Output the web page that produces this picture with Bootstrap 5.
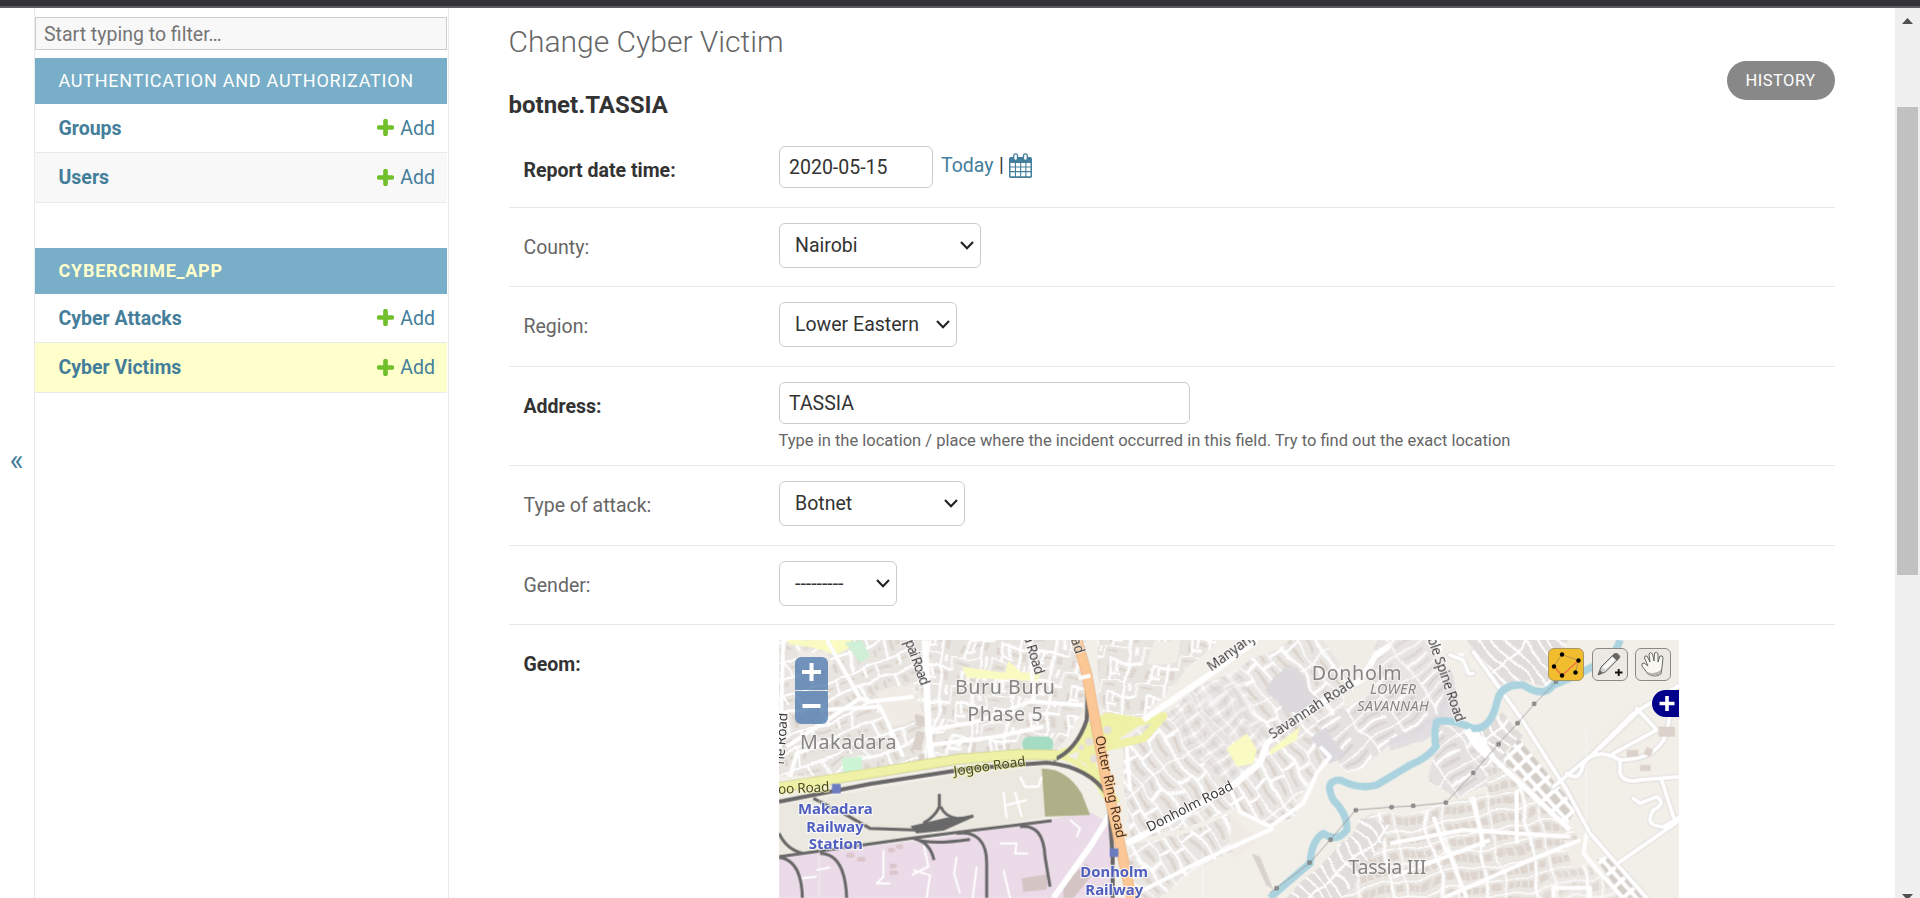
<!DOCTYPE html>
<html lang="en">
<head>
<meta charset="utf-8">
<meta name="viewport" content="width=device-width, initial-scale=1">
<title>Change Cyber Victim</title>
<link href="https://cdn.jsdelivr.net/npm/bootstrap@5.3.0/dist/css/bootstrap.min.css" rel="stylesheet">
<script src="https://cdn.jsdelivr.net/npm/bootstrap@5.3.0/dist/js/bootstrap.bundle.min.js" defer></script>
<style>
  html, body { height: 100%; }
  body { font-family: Roboto, "Liberation Sans", sans-serif; font-size: 19.5px; line-height: 24px; color: #333; background: #fff; overflow: hidden; }
  a { color: #447e9b; text-decoration: none; }
  .top-strip { height: 8px; background: #333438; border-bottom: 2px solid #5f5d63; }
  .rail { width: 34px; padding: 440px 1px 0 0; font-size: 30px; line-height: 24px; color: #447e9b; }
  .side { width: 415px; border: solid #eaeaea; border-width: 0 1px; padding: 9px 1px 0 0; }
  .side .form-control { height: 33px; border: 1px solid #ccc; border-radius: 0; background: #f8f8f8; padding: 1px 8px 0; font-size: 19.5px; line-height: 30px; margin-bottom: 8px; }
  .side .form-control::placeholder { color: #757575; }
  .app-head { height: 46px; padding: 0 23.5px; line-height: 45px; font-size: 18px; letter-spacing: .75px; background: #79aec8; color: #fff; text-transform: uppercase; }
  .app-head.current { color: #ffffcc; font-weight: 700; letter-spacing: .75px; }
  .app-list { margin-bottom: 45px; border-bottom: 1px solid #eaeaea; }
  .app-list .list-group-item { height: 49px; padding: 1px 12px 0 23.5px; border: 0; border-bottom: 1px solid #e8e8e8; background: #fff; }
  .app-list .list-group-item.alt { background: #f8f8f8; }
  .app-list .list-group-item.current { background: #ffffcc; }
  .app-list svg { margin: -2px 6px 0 0; }
  main { padding: 16px 60px 0 59.5px; }
  h1 { font-size: 30px; font-weight: 300; line-height: 36px; color: #666; margin: 0 0 30px; }
  h2 { font-size: 24px; font-weight: 700; line-height: 30px; margin: 0 0 11px; }
  .history { margin-top: 37px; width: 108px; height: 39px; padding: 0 1px 0 0; line-height: 39px; background: #888; color: #fff; font-size: 16.5px; letter-spacing: .5px; border: 0; }
  .field { border-bottom: 1px solid #e8e8e8; padding-top: 15px; }
  .field.h77 { height: 77px; } .field.h79 { height: 79px; } .field.h80 { height: 80px; } .field.h99 { height: 99px; }
  .field > label { width: 270.5px; padding: 13px 0 0 15px; flex: none; color: #666; }
  .field > label.fw-bold { color: #333; }
  .field .form-control, .field .form-select { font-size: 19.5px; color: #333; border: 1px solid #ccc; border-radius: 6px; background-color: #fff; }
  .field .form-control { height: 42px; padding: 0 9px; line-height: 40px; }
  .field .form-select { height: 45px; padding: 0 30px 0 15px; line-height: 42px; background-image: url("data:image/svg+xml,%3Csvg xmlns='http://www.w3.org/2000/svg' viewBox='0 0 14 9'%3E%3Cpath d='M1 1l6 6.3L13 1' fill='none' stroke='%23222' stroke-width='2.1'/%3E%3C/svg%3E"); background-size: 14px 9px; background-position: right 6px center; }
  .w-date { width: 154px; } .w-county { width: 202px; } .w-region { width: 178px; } .w-address { width: 411px; } .w-attack { width: 186px; } .w-gender { width: 118px; }
  .date-links { gap: 5.5px; margin: 7px 0 0 8px; }
  .help-line { font-size: 16.5px; line-height: 20px; color: #666; margin: 7px 0 0 -.5px; }
  .map { width: 900px; height: 258px; position: relative; overflow: hidden; background: #f2efe9; }
  .map > svg { display: block; }
  .zoomer { position: absolute; left: 16px; top: 17px; width: 33px; }
  .zoomer div { height: 33px; background: rgba(84,126,176,.82); border-radius: 6px 6px 0 0; }
  .zoomer div + div { margin-top: 1px; border-radius: 0 0 6px 6px; }
  .tools { position: absolute; right: 8px; top: 8px; gap: 7px; }
  .tools div { width: 36px; height: 33px; border: 1px solid #8a8984; border-radius: 6px; background: #ebe9e3; }
  .tools div.on { background: #f1bd2e; border-color: #a99763; margin-right: 1px; }
  .tools svg, .zoomer svg, .layers svg { display: block; }
  .layers { position: absolute; right: 0; top: 50px; width: 27px; height: 27px; border-radius: 14px 0 0 14px; background: #00008b; }
  .scroller { width: 25px; background: #f0f0f0; padding-top: 10px; }
  .scroller .thumb { width: 21px; height: 468px; background: #c1c1c1; margin: 83px 0 319px 2px; }
  .scroller svg { display: block; margin-left: 7px; }
  .pl { font-family: "Noto Sans", sans-serif; }
</style>
</head>
<body class="d-flex flex-column vh-100">
<div class="top-strip flex-shrink-0"></div>
<div class="d-flex flex-grow-1 overflow-hidden">
  <div class="rail flex-shrink-0 text-center">«</div>
  <nav class="side flex-shrink-0">
    <input class="form-control" type="text" placeholder="Start typing to filter…">
    <div class="app-head">Authentication and Authorization</div>
    <ul class="list-group list-group-flush app-list">
      <li class="list-group-item d-flex align-items-center justify-content-between"><a class="fw-bold" href="#">Groups</a><a href="#" class="d-flex align-items-center"><svg width="17" height="17" viewBox="0 0 16 16"><path d="M8 2v12M2 8h12" stroke="#70bf2b" stroke-width="4.400" stroke-linecap="round"/></svg>Add</a></li>
      <li class="list-group-item alt d-flex align-items-center justify-content-between"><a class="fw-bold" href="#">Users</a><a href="#" class="d-flex align-items-center"><svg width="17" height="17" viewBox="0 0 16 16"><path d="M8 2v12M2 8h12" stroke="#70bf2b" stroke-width="4.400" stroke-linecap="round"/></svg>Add</a></li>
    </ul>
    <div class="app-head current">Cybercrime_App</div>
    <ul class="list-group list-group-flush app-list">
      <li class="list-group-item d-flex align-items-center justify-content-between"><a class="fw-bold" href="#">Cyber Attacks</a><a href="#" class="d-flex align-items-center"><svg width="17" height="17" viewBox="0 0 16 16"><path d="M8 2v12M2 8h12" stroke="#70bf2b" stroke-width="4.400" stroke-linecap="round"/></svg>Add</a></li>
      <li class="list-group-item current d-flex align-items-center justify-content-between"><a class="fw-bold" href="#">Cyber Victims</a><a href="#" class="d-flex align-items-center"><svg width="17" height="17" viewBox="0 0 16 16"><path d="M8 2v12M2 8h12" stroke="#70bf2b" stroke-width="4.400" stroke-linecap="round"/></svg>Add</a></li>
    </ul>
  </nav>
  <main class="flex-grow-1">
    <div class="d-flex justify-content-between align-items-start">
      <div><h1>Change Cyber Victim</h1><h2>botnet.TASSIA</h2></div>
      <a class="btn rounded-pill history" href="#">HISTORY</a>
    </div>
    <div class="field h77 d-flex align-items-start">
      <label class="fw-bold">Report date time:</label>
      <input class="form-control w-date" type="text" value="2020-05-15">
      <div class="d-flex align-items-center date-links"><a href="#">Today</a><span>|</span>
        <svg width="23" height="25" viewBox="0 0 23 25"><rect x="0" y="4" width="23" height="21" rx="1.800" fill="#447e9b"/><path d="M1.500 10h4.400v3.400H1.500zM7 10h4.100v3.400H7zM12.200 10h4.100v3.400h-4.100zM17.400 10h4.100v3.400h-4.100zM1.500 14.500h4.400V18H1.500zM7 14.500h4.100V18H7zM12.200 14.500h4.100V18h-4.100zM17.400 14.500h4.100V18h-4.100zM1.500 19.200h4.400v4.100H1.500zM7 19.200h4.100v4.100H7zM12.200 19.200h4.100v4.100h-4.100zM17.400 19.200h4.100v4.100h-4.100z" fill="#fff"/><rect x="4.700" y=".8" width="3.800" height="6.500" rx="1.900" fill="#fff" stroke="#447e9b" stroke-width="1.300"/><rect x="14.500" y=".8" width="3.800" height="6.500" rx="1.900" fill="#fff" stroke="#447e9b" stroke-width="1.300"/></svg>
      </div>
    </div>
    <div class="field h79 d-flex align-items-start"><label>County:</label><select class="form-select w-county"><option>Nairobi</option></select></div>
    <div class="field h80 d-flex align-items-start"><label>Region:</label><select class="form-select w-region"><option>Lower Eastern</option></select></div>
    <div class="field h99 d-flex align-items-start"><label class="fw-bold">Address:</label><div><input class="form-control w-address" type="text" value="TASSIA"><div class="help-line">Type in the location / place where the incident occurred in this field. Try to find out the exact location</div></div></div>
    <div class="field h80 d-flex align-items-start"><label>Type of attack:</label><select class="form-select w-attack"><option>Botnet</option></select></div>
    <div class="field h79 d-flex align-items-start"><label>Gender:</label><select class="form-select w-gender"><option>---------</option></select></div>
    <div class="field border-0 d-flex align-items-start"><label class="fw-bold">Geom:</label>
      <div class="map">
        <svg width="900" height="258" viewBox="27 30 2700 774">
          <defs>
            <filter id="soft" x="0" y="0" width="100%" height="100%"><feGaussianBlur stdDeviation="1.600"/></filter>
            <!-- bends the regular street grids a little -->
            <filter id="bend" x="0" y="0" width="100%" height="100%" color-interpolation-filters="sRGB"><feTurbulence type="fractalNoise" baseFrequency=".009" numOctaves="2" seed="4"/><feDisplacementMap in="SourceGraphic" scale="46" xChannelSelector="R" yChannelSelector="G"/></filter>
            <!-- housing blocks: small buildings between white streets -->
            <pattern id="pA" width="124" height="104" patternUnits="userSpaceOnUse" patternTransform="rotate(-22)"><rect width="124" height="104" fill="#e8e5e1"/><path d="M12 18h46v8H12zM76 16h38v8H76zM12 66h10v22H12zM30 66h12v12H30zM76 60h12v30H76zM98 64h14v14H98z" fill="#ddd5ce"/><path d="M0 2h124M0 50h124M60 50v54M2 0v50M90 2v30" stroke="#fff" stroke-width="8" fill="none"/></pattern>
            <pattern id="pB" width="112" height="96" patternUnits="userSpaceOnUse" patternTransform="rotate(8)"><rect width="112" height="96" fill="#e8e5e1"/><path d="M8 14h34v8H8zM84 54h12v26H84zM12 60h14v24H12zM70 12h8v18h-8zM50 58h20v8H50z" fill="#ddd5ce"/><path d="M0 0h76v44H26v52M112 0v44H76M76 44v52M94 0v24M46 44v28M26 78h30" stroke="#fff" stroke-width="8" fill="none"/></pattern>
            <pattern id="pC" width="148" height="90" patternUnits="userSpaceOnUse" patternTransform="rotate(54)"><rect width="148" height="90" fill="#e8e5e2"/><path d="M12 18h50v9H12zM84 18h50v9H84zM12 62h30v9H12zM62 62h70v9H62z" fill="#dcd4cd"/><path d="M0 0h148M0 45h148M0 0v90M74 0v45M52 45v45" stroke="#fff" stroke-width="9" fill="none"/></pattern>
            <pattern id="pD" width="110" height="76" patternUnits="userSpaceOnUse" patternTransform="rotate(-38)"><rect width="110" height="76" fill="#e4e1e0"/><path d="M12 15h76v8H12zM12 53h66v8H12z" fill="#d8d3d0"/><path d="M0 0h110M0 38h88M0 0v76" stroke="#fff" stroke-width="9" fill="none"/></pattern>
            <pattern id="pE" width="144" height="50" patternUnits="userSpaceOnUse" patternTransform="rotate(-11)"><rect width="144" height="50" fill="#eae6e2"/><path d="M10 13h16v22H10zM31 15h14v20H31zM51 13h20v22H51zM78 15h14v20H78zM112 13h22v22h-22z" fill="#ddd5ce"/><path d="M0 0h144M0 0v50M100 0v50" stroke="#fff" stroke-width="9" fill="none"/></pattern>
            <pattern id="pF" width="30" height="140" patternUnits="userSpaceOnUse" patternTransform="rotate(-42)"><rect width="30" height="140" fill="#e0dddb"/><path d="M0 0v140M0 0h30" stroke="#fff" stroke-width="13" fill="none"/></pattern>
            <pattern id="pG" width="34" height="42" patternUnits="userSpaceOnUse" patternTransform="rotate(-42)"><rect width="34" height="42" fill="#fff"/><rect x="6" y="6" width="22" height="30" rx="3" fill="#d4cec9"/></pattern>
          </defs>
          <g filter="url(#soft)">
          <rect x="27" y="30" width="2700" height="774" fill="#f2efe9"/>
          <!-- housing districts -->
          <g filter="url(#bend)">
          <path d="M-10 0H430L470 400L-10 450z" fill="url(#pA)"/>
          <path d="M430 0H940L950 220L850 390L480 405z" fill="url(#pB)"/>
          <path d="M310 190l125-30 20 95-90 35zM85 60l80 10 30 35-110 30z" fill="#f0ece5"/>
          <path d="M425 250h44v40h-44zM430 310h35v45h-35zM455 365h20v30h-20z" fill="#d9d0c9"/>
          <path d="M975 0H1370L1110 270L990 260z" fill="url(#pB)"/>
          <path d="M1140 30l80 0 0 65-95 10z" fill="#f1eee8"/>
          <path d="M1060 340L1180 250L1390 120L1600 0H1640L1780 180L1650 385L1580 555L1500 590L1400 540L1180 600L1075 640L1050 480z" fill="url(#pC)"/>
          <path d="M1180 260L1400 110L1500 340L1370 470z" fill="url(#pD)" opacity=".5"/>
          <path d="M1470 170L1550 105L1610 160L1660 210L1545 260z" fill="#dcd9dc"/>
          <path d="M1640 0H1800L1860 160L1720 240z" fill="#f0ede7"/>
          <path d="M1600 60L1660 40L1760 170L1700 210z" fill="url(#pC)"/>
          <path d="M1640 280L1860 160L2050 120L2060 230L1730 430z" fill="url(#pD)"/>
          <path d="M1830 0H1980L2010 160L1860 230L1800 140z" fill="url(#pD)" opacity=".8"/>
          <path d="M1610 330l60-35 60 70-55 30z" fill="#dcd9de"/>
          <path d="M1860 330l150-90 20-60-20-60 40 10 30 130-220 110z" fill="#dddadf" opacity=".8"/>
          <path d="M1080 650L1370 560L1470 620L1300 710L1110 830H1080z" fill="url(#pC)"/>
          <path d="M1380 560l90 60-70 60z" fill="#f0ece5"/>
          <path d="M2080 0H2400L2340 170L2260 160L2190 160z" fill="url(#pF)"/>
          <path d="M2000 280L2140 310L2240 410L2060 510L1980 450z" fill="url(#pD)"/>
          <path d="M2120 310l70-60 70 60-70 80z" fill="url(#pF)"/>
          <path d="M1860 560L2150 490L2160 390L2400 600L2430 640L2260 830H1560L1710 640L1790 560z" fill="url(#pE)"/>
          <path d="M1520 830l190-176 60-90 90 30-160 236z" fill="url(#pF)"/>
          <path d="M2100 830l180-186 160 20 30 60 130 106z" fill="url(#pE)" opacity=".8"/>
          </g>
          <path d="M2200 390L2245 325L2420 535L2390 585z" fill="url(#pG)"/>
          <path d="M2380 630l70 0 20 60-60 30z" fill="#f1eee8"/>
          <path d="M2480 690l45-20 95 134h-60z" fill="url(#pG)"/>
          <!-- parks, yards and station grounds -->
          <path d="M50 30h195l-10 25-40 22-25-12-40-12-70-10z" fill="#fafac3"/>
          <path d="M225 38l50-8 25 50-30 18z" fill="#cfefd6"/>
          <path d="M215 385l60-5v55l-52 5z" fill="#cbf5d5"/>
          <path d="M575 110l130 18 10-35 40 35 60 0-15 25-210-10z" fill="#fafac3"/>
          <rect x="757" y="320" width="93" height="46" rx="20" fill="#a3dcc3"/>
          <path d="M1370 355l60-45 20 30 10 20-10 40-50 10z" fill="#fafac3"/>
          <path d="M1500 360l90-70-10 40-80 45z" fill="#fafac3"/>
          <path d="M27 525L560 435L815 410L825 560L500 620L27 670z" fill="#ebe8e0"/>
          <path d="M27 680L500 625L830 570L960 545L1035 590L1020 804H27z" fill="#ebdbe8"/>
          <path d="M815 415q75 0 120 75l25 65-135 5z" fill="#b0b088"/>
          <path d="M755 745l75-12v45l-70 8zM880 760l70-60 20 30-60 74h-30z" fill="#d4c4c4"/>
          <path d="M235 676h12M268 688h12M360 660h8M385 650h8M365 708h8M365 728h12" stroke="#dcc6cc" stroke-width="14" stroke-linecap="round"/>
          <!-- interchange -->
          <path d="M860 375L930 350L960 290L1010 260L1115 275L1180 258L1120 325L1010 350L960 400L1000 460L1040 520" fill="none" stroke="#eef1a6" stroke-width="24" stroke-linejoin="round"/>
          <path d="M860 375Q960 400 1005 500" fill="none" stroke="#eef1a6" stroke-width="18"/>
          <path d="M940 330l70-70 100 25-60 40-80 85-50-20z" fill="#eef1a6"/>
          <circle cx="1012" cy="300" r="12" fill="#e4e1dd"/><circle cx="957" cy="335" r="12" fill="#e4e1dd"/><circle cx="972" cy="386" r="12" fill="#e4e1dd"/><circle cx="934" cy="352" r="8" fill="#e4e1dd"/>
          <!-- side streets -->
          <g fill="none" stroke="#fff" stroke-width="12" stroke-linejoin="round">
            <path d="M40 30L30 360M170 30L270 205L50 350"/><path d="M465 30L475 300L487 408" stroke-width="20"/>
            <path d="M480 300L620 275L780 215L940 225M480 345L680 320L820 290M780 30L790 210M430 200L300 215L270 205M150 240L330 230L400 380M60 440L80 370L200 330"/>
            <path d="M1120 270L1310 140L1460 30M1860 45L1815 80L1780 140" stroke-width="18"/>
            <path d="M1070 640L1190 580L1390 465L1470 400L1490 340L1620 235L1780 145" stroke-width="19"/>
            <path d="M1380 475L1410 545L1500 590L1600 520L1640 430L1680 380L1650 350M1080 800L1300 690L1510 595M1080 480L1070 350"/>
            <path d="M1035 530L960 650L850 804" stroke-width="18"/>
            <path d="M2000 30L2010 65M2070 70L2090 125M2100 280L2170 385L2400 600" stroke-width="16"/>
            <path d="M1860 640L2080 600L2400 620M2020 804L2280 690L2430 630M1870 740L2160 630M2030 650l60 154M1990 560l40 110M2110 500l30 150M2240 480v160M2450 610l-10 60 60 70 60 64M2350 804v-30h110v30"/>
            <path d="M340 660v80l-20 20h40M460 640l15 70-50 25M430 720l50 15-10 69M140 720l40-8M90 745l50-5M560 680l-8 50 18 60M620 710l-12 94M690 640h50l-5 30h40M700 720l20 84M900 570l30 25-10 25" stroke="#fff" stroke-width="6"/>
            <path d="M750 440l15 30 40 0 10-30M700 485l10 80M735 485l20 75M710 525l60-15" stroke="#fff" stroke-width="7"/>
          </g>
          <g fill="none" stroke="#dad7d9" stroke-width="17" stroke-linejoin="round" stroke-linecap="round">
            <path d="M2110 65L2250 260L2390 480L2460 610L2630 804M2350 470L2470 370L2590 250L2730 165M2490 355L2600 250M2390 430Q2430 460 2440 400Q2480 350 2550 390Q2660 390 2690 310L2700 250M2530 370L2660 300L2600 235M2550 395V430Q2560 460 2610 450L2730 440M2550 695L2730 570M2590 505L2610 520L2660 500Q2690 520 2650 540Q2620 590 2680 590L2730 560M2675 450L2710 560M2040 75L2080 90L2095 130L2110 130"/>
          </g>
          <g fill="none" stroke="#fff" stroke-width="12" stroke-linejoin="round" stroke-linecap="round">
            <path d="M2110 65L2250 260L2390 480L2460 610L2630 804M2350 470L2470 370L2590 250L2730 165M2490 355L2600 250M2390 430Q2430 460 2440 400Q2480 350 2550 390Q2660 390 2690 310L2700 250M2530 370L2660 300L2600 235M2550 395V430Q2560 460 2610 450L2730 440M2550 695L2730 570M2590 505L2610 520L2660 500Q2690 520 2650 540Q2620 590 2680 590L2730 560M2675 450L2710 560M2040 75L2080 90L2095 130L2110 130"/>
          </g>
          <path d="M2665 290h50v30h-50zM2630 350l20 10-10 20-20-8zM2610 405h32v18h-32zM2570 360h35v20h-35z" fill="#ddd2cb"/>
          <path d="M1445 670l25 10 40 100-22-15z" fill="#d9d3ce"/>
          <!-- river -->
          <path d="M2550 30Q2540 70 2500 90Q2440 130 2350 165Q2320 205 2260 165Q2190 160 2180 220Q2160 300 2110 295Q2040 265 2000 275Q1990 310 1998 350Q1970 385 1920 405Q1870 435 1820 465Q1770 480 1710 450Q1660 450 1690 510Q1735 555 1730 600Q1700 640 1660 610Q1625 630 1620 700Q1560 750 1500 804" fill="none" stroke="#aad3df" stroke-width="22" stroke-linejoin="round"/>
          <path d="M2090 300l30 45 35 35" fill="none" stroke="#fff" stroke-width="22"/>
          <!-- power line -->
          <path d="M1500 788L1620 698L1680 630L1757 540L1865 531L1930 528L2028 518L2110 428L2185 342L2242 280L2293 222L2360 154" fill="none" stroke="#999" stroke-width="2.500"/>
          <path d="M1515 770h9v9h-9zM1614 693h9v9h-9zM1677 625h9v9h-9zM1753 536h9v9h-9zM1860 527h9v9h-9zM1925 523h9v9h-9zM2023 513h9v9h-9zM2105 424h9v9h-9zM2181 338h9v9h-9zM2238 275h9v9h-9zM2288 217h9v9h-9zM2353 150h9v9h-9z" fill="#aaa" stroke="#666" stroke-width="3"/>
          <!-- railways -->
          <g fill="none" stroke="#686868" stroke-width="9">
            <path d="M27 515L300 462L600 415L830 398Q960 410 1015 500L1028 680V804" stroke-width="12"/>
            <path d="M915 30Q960 120 950 270Q920 360 850 390" stroke-width="12"/>
            <path d="M27 680L420 625L620 600L845 572M130 505L220 550L300 595L430 600L610 558M27 610Q50 660 100 670M27 682Q95 690 97 804M150 670Q225 670 230 804M560 610Q650 600 650 700V804M750 590Q820 580 825 680L840 770M430 625Q480 635 492 690M440 628Q480 645 600 628M508 492V530Q495 560 460 580M512 530Q525 560 560 565"/>
            <path d="M425 590L530 565L610 560L520 600L440 608z" fill="#686868" stroke-width="4"/>
          </g>
          <!-- trunk road -->
          <path d="M920 30L950 130L975 270L1010 460L1085 804" fill="none" stroke="#e6b184" stroke-width="32"/>
          <path d="M920 30L950 130L975 270L1010 460L1085 804" fill="none" stroke="#fbc795" stroke-width="27"/>
          <path d="M925 145l36-8" stroke="#fff" stroke-width="12"/>
          <path d="M27 472L300 430L560 388L745 373L860 375" fill="none" stroke="#d2d49a" stroke-width="32"/>
          <path d="M27 472L300 430L560 388L745 373L860 375" fill="none" stroke="#eef1a6" stroke-width="27"/>
          <path d="M186 462h26v28h-26zM1019 655h26v26h-26z" fill="#6b7dc0"/>
          <path d="M148 500V804M1298 150V804M2448 300V804" stroke="#fff" stroke-width="2" opacity=".7"/>
          </g>
          <!-- place names -->
          <g class="pl" fill="#858585" stroke="#f5f3ef" stroke-width="7" paint-order="stroke" stroke-opacity=".75" font-size="59">
            <text x="555" y="191" textLength="300">Buru Buru</text><text x="592" y="272" textLength="226">Phase 5</text><text x="90" y="358" textLength="290">Makadara</text>
            <text x="1625" y="149" textLength="270">Donholm</text><text x="1735" y="731" textLength="234">Tassia III</text>
            <g font-size="43" font-style="italic"><text x="1800" y="192" textLength="138">LOWER</text><text x="1762" y="243" textLength="214">SAVANNAH</text></g>
          </g>
          <g class="pl" fill="#4f5fc0" stroke="#fff" stroke-width="7" paint-order="stroke" stroke-opacity=".7" font-size="45" font-weight="700">
            <text x="84" y="551" textLength="224" lengthAdjust="spacingAndGlyphs">Makadara</text><text x="109" y="605" textLength="172" lengthAdjust="spacingAndGlyphs">Railway</text><text x="116" y="658" textLength="162" lengthAdjust="spacingAndGlyphs">Station</text>
            <text x="931" y="740" textLength="203" lengthAdjust="spacingAndGlyphs">Donholm</text><text x="946" y="794" textLength="174" lengthAdjust="spacingAndGlyphs">Railway</text>
          </g>
          <g class="pl" fill="#3d3a3a" stroke="#fff" stroke-width="6" paint-order="stroke" stroke-opacity=".7" font-size="41">
            <text transform="translate(404 35) rotate(70)" textLength="143">pai Road</text>
            <text transform="translate(758 12) rotate(73)" textLength="130">ia Road</text>
            <text transform="translate(902 28) rotate(72)">ad</text>
            <text transform="translate(42 404) rotate(-86)" textLength="155">ne Road</text>
            <text transform="translate(1324 125) rotate(-36)" textLength="184">Manyanja</text>
            <text transform="translate(1508 328) rotate(-33)" textLength="295">Savannah Road</text>
            <text transform="translate(1138 606) rotate(-27)" textLength="285">Donholm Road</text>
            <text transform="translate(1972 26) rotate(71)" textLength="267">ble Spine Road</text>
            <g stroke="#f2f5a9" fill="#4a4a24"><text transform="translate(553 437) rotate(-8)" textLength="217">Jogoo Road</text><text transform="translate(25 492) rotate(-3)" textLength="154">oo Road</text></g>
            <text stroke="#fbc795" fill="#4a3522" transform="translate(975 320) rotate(78)" textLength="313">Outer Ring Road</text>
          </g>
        </svg>
        <div class="zoomer"><div><svg width="33" height="33"><path d="M7 15h19M16.500 6v18" stroke="#fff" stroke-width="4"/></svg></div><div><svg width="33" height="33"><path d="M7.500 15h18" stroke="#fff" stroke-width="4"/></svg></div></div>
        <div class="tools d-flex">
          <div class="on"><svg width="34" height="31"><path d="M13 5.500l16.500 6-3 12M13 5.500L5 17" stroke="#b89650" fill="none"/><path d="M5 17.500l8 9 16.500-15" stroke="#ee7040" fill="none" stroke-width="1.300"/><g fill="#000"><circle cx="13" cy="5.500" r="2.200"/><circle cx="29.500" cy="11.500" r="2.200"/><circle cx="5" cy="17.500" r="2.200"/><circle cx="13" cy="26.500" r="2.200"/><circle cx="26.500" cy="23.500" r="2.200"/></g></svg></div>
          <div><svg width="34" height="31"><path d="M5 26l3-8L21 5q4-2 6 3L12.500 23z" fill="#d4d4d0" stroke="#666" stroke-width="1"/><path d="M9.500 18.500L21 7l3 2.500-11.500 11z" fill="#fbfbf8"/><path d="M5 26l2-5 3 3zM19 7l5 5 2.500-3q-1-5-5-4z" fill="#666"/><path d="M22 23.500h7.500M25.700 20v7" stroke="#111" stroke-width="1.900"/></svg></div>
          <div><svg width="34" height="31"><path d="M12 25L6 17q-1-3 2-3l4 3-3.500-8q0-3 2.500-2l3 6L13 5q1-3 3.500 0l1.500 7 .5-8q2.500-2 3.500 1v8l2-6q3-1 3 2L26 18l-1 7q-6 4-13 0z" fill="#f8f7f1" stroke="#666" stroke-width="1"/><path d="M11.500 23q6.500 3 13.500-2v4q-7 3.500-13 0z" fill="#b4b3ae"/></svg></div>
        </div>
        <div class="layers"><svg width="27" height="27"><path d="M7.500 13.500h15M15 6v15" stroke="#fff" stroke-width="3.600"/></svg></div>
      </div>
    </div>
  </main>
  <div class="scroller flex-shrink-0">
    <svg width="11" height="6"><path d="M0 6L5.500 0 11 6z" fill="#505050"/></svg>
    <div class="thumb"></div>
    <svg width="11" height="6"><path d="M0 0h11L5.500 6z" fill="#505050"/></svg>
  </div>
</div>
</body>
</html>
